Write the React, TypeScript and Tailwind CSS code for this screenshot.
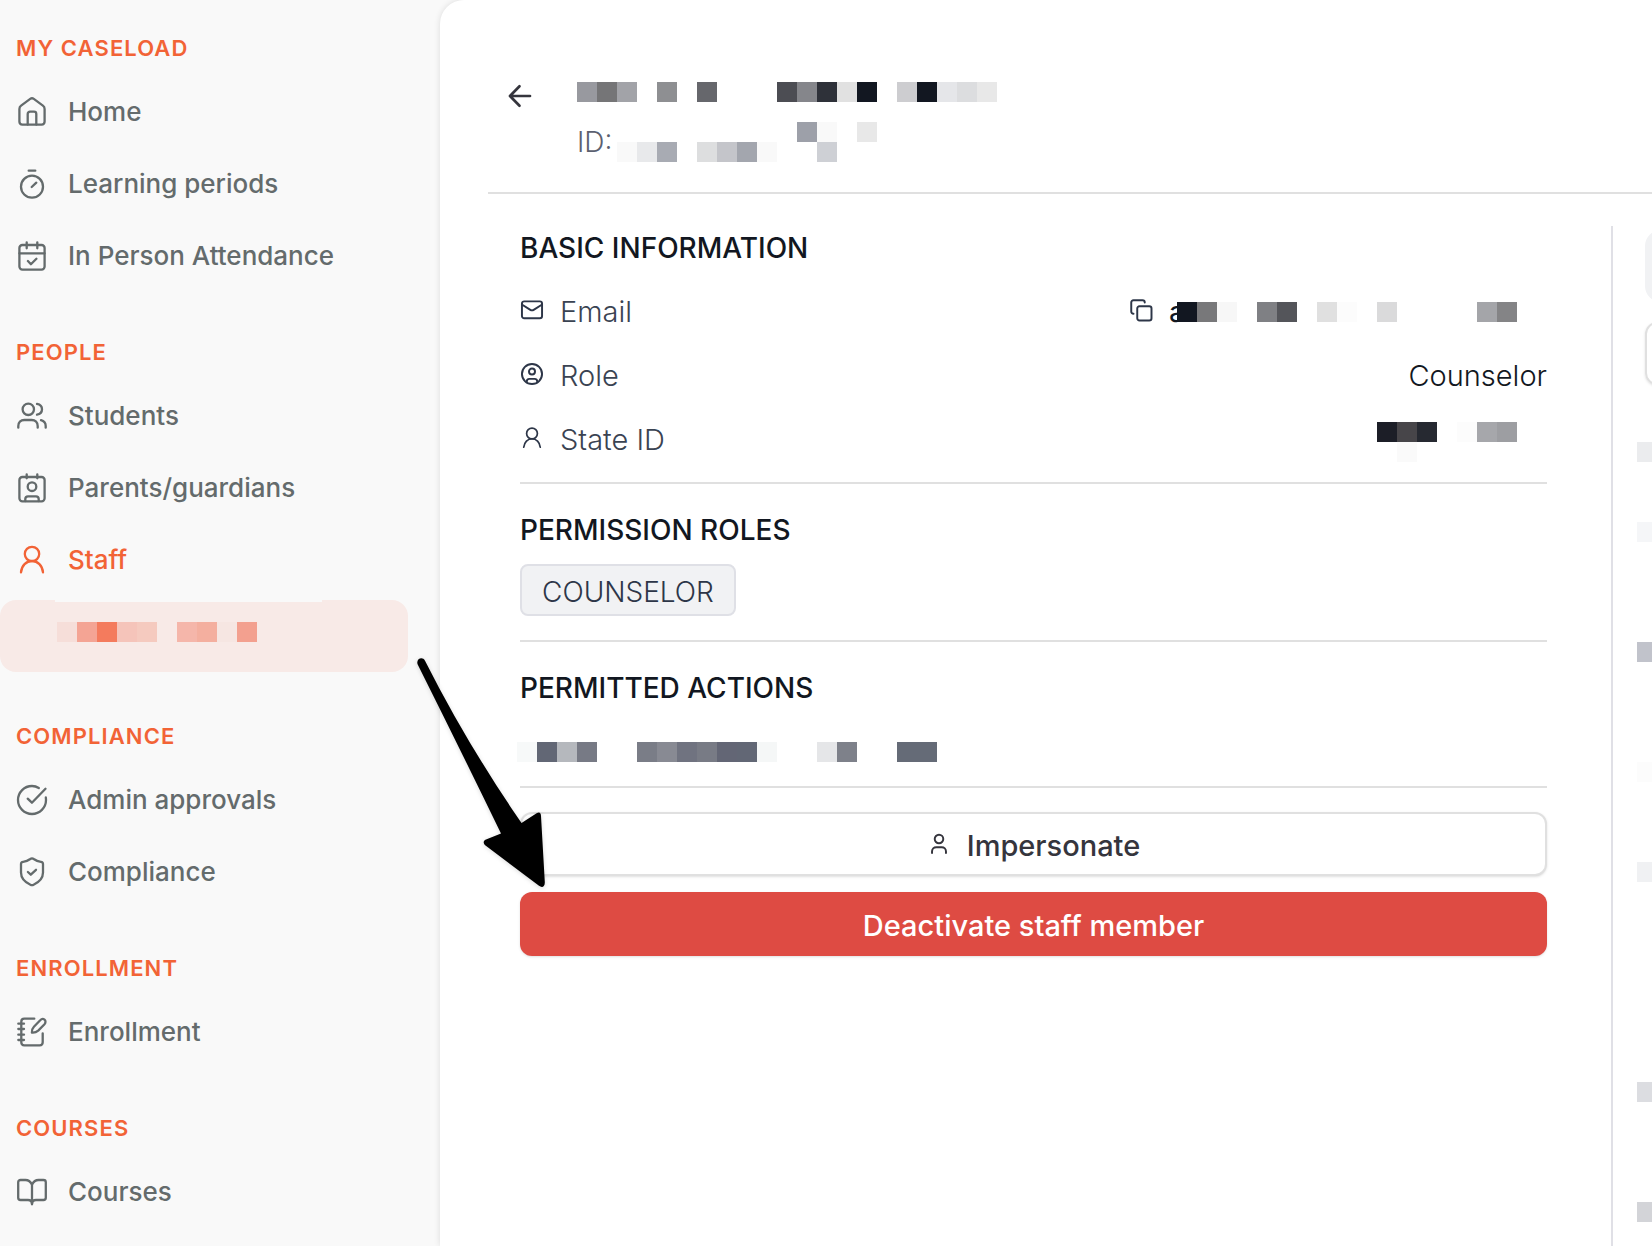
import { ReactNode } from "react";
import { clsx } from "clsx";

interface IconProps {
  children: ReactNode;
  className?: string;
}

function Icon({ children, className = "h-8 w-8" }: IconProps) {
  return (
    <svg
      viewBox="0 0 32 32"
      fill="none"
      stroke="currentColor"
      strokeWidth="2.300"
      strokeLinecap="round"
      strokeLinejoin="round"
      aria-hidden="true"
      className={clsx("shrink-0", className)}
    >
      {children}
    </svg>
  );
}

const icons = {
  home: (
    <>
      <path d="M3.4 13c0-1.4.6-2.6 1.700-3.400l9.100-6.700c1.100-.8 2.500-.8 3.600 0l9.100 6.700c1.100.8 1.700 2 1.700 3.400v12.600c0 1.700-1.300 3-3 3H6.400c-1.700 0-3-1.300-3-3z" />
      <path d="M11.700 28.600V18c0-1.300 1-2.300 2.300-2.300h4c1.300 0 2.300 1 2.300 2.300v10.600" />
    </>
  ),
  timer: (
    <>
      <circle cx="16" cy="18.700" r="11" />
      <path d="M12.700 2.700h6.600M15.700 19l4.600-4.300" />
    </>
  ),
  calendar: (
    <>
      <rect x="3.400" y="5" width="25.200" height="24.600" rx="3" />
      <path d="M3.400 13.300h25.200M10.700 2.300v6M21.300 2.300v6M11.900 21l3 3.200 5.500-5.500" />
    </>
  ),
  users: (
    <>
      <circle cx="12.300" cy="9.300" r="5.700" />
      <path d="M21 3.900c2.900.5 5 2.700 5 5.400s-2.100 4.900-5 5.400M2.300 27.700V26c0-3.600 2.400-6 6-6h7.400c3.600 0 6 2.400 6 6v1.700M25 20.200c3 .8 4.700 3 4.700 5.800v1.700" />
    </>
  ),
  contact: (
    <>
      <rect x="3.400" y="5" width="25.200" height="24.300" rx="3" />
      <circle cx="16" cy="14.700" r="4.300" />
      <path d="M10.700 2.300v4M21.300 2.300v4M9.300 29v-2c0-1.500 1.200-2.700 2.700-2.700h8c1.500 0 2.700 1.200 2.700 2.700v2" />
    </>
  ),
  user: (
    <>
      <circle cx="16" cy="10" r="7.200" />
      <path d="M5 28.300C5.600 21.600 10.300 17 16 17s10.400 4.600 11 11.300" />
    </>
  ),
  check: (
    <>
      <path d="M22.800 4C20.800 2.700 18.500 2 16 2 8.300 2 2 8.300 2 16s6.300 14 14 14 14-6.300 14-14c0-.9-.1-1.700-.2-2.500" />
      <path d="M11.700 14.700l4.200 4L29.500 4.700" />
    </>
  ),
  shield: (
    <>
      <path d="M14.300 3c1-.8 2.400-.8 3.400 0 2.300 1.700 4.300 2.500 7.200 2.800 1.200.1 2.100 1 2.100 2.200v8.600c0 6-4 9.700-9.400 12.200-1 .5-2.200.5-3.200 0C9 26.300 5 22.600 5 16.600V8c0-1.200.9-2.100 2.100-2.200 2.900-.3 4.900-1.100 7.200-2.800z" />
      <path d="M11.900 16l2.900 2.700 5.200-4.900" />
    </>
  ),
  notebook: (
    <>
      <path d="M18.300 2.700H8.300c-1.700 0-3 1.300-3 3v20.600c0 1.700 1.300 3 3 3h15.400c1.700 0 3-1.300 3-3v-9" />
      <path d="M2.300 7.700H8M2.300 13H8M2.300 18.700H8M2.300 24H8" />
      <path d="M15.900 16.600c-.3-2.500.5-4.300 2-5.900l6.300-6.500c1.200-1.300 3-1.700 4.300-.6s1.300 3.200 0 4.600l-6.300 6.400c-1.700 1.500-3.600 2.300-6.300 2z" />
    </>
  ),
  book: (
    <>
      <path d="M16 8.500C14.500 5.500 12.500 4 9.500 4H4.500C3.200 4 2.200 5 2.200 6.300v15.400c0 1.300 1 2.300 2.300 2.300H12c2.300 0 4 1.600 4 4 0-2.400 1.700-4 4-4h7.500c1.300 0 2.300-1 2.300-2.300V6.300C29.800 5 28.800 4 27.500 4h-5c-3 0-5 1.500-6.500 4.500z" />
      <path d="M16 8.500v19.800" />
    </>
  ),
};

interface NavItem {
  label: string;
  icon: ReactNode;
  active?: boolean;
}

const sections: { title: string; items: NavItem[] }[] = [
  {
    title: "MY CASELOAD",
    items: [
      { label: "Home", icon: icons.home },
      { label: "Learning periods", icon: icons.timer },
      { label: "In Person Attendance", icon: icons.calendar },
    ],
  },
  {
    title: "PEOPLE",
    items: [
      { label: "Students", icon: icons.users },
      { label: "Parents/guardians", icon: icons.contact },
      { label: "Staff", icon: icons.user, active: true },
    ],
  },
  {
    title: "COMPLIANCE",
    items: [
      { label: "Admin approvals", icon: icons.check },
      { label: "Compliance", icon: icons.shield },
    ],
  },
  { title: "ENROLLMENT", items: [{ label: "Enrollment", icon: icons.notebook }] },
  { title: "COURSES", items: [{ label: "Courses", icon: icons.book }] },
];

// Redacted text: one string per block, "" leaves a gap
const redacted = {
  name: [["bg-[#98999f]", "bg-[#757577]", "bg-[#a2a3a8]", "", "bg-[#8e8f92]", "", "bg-[#66676c]", "", "", "", "bg-[#4c4d53]", "bg-[#85868b]", "bg-[#2e3139]", "bg-[#e1e1e1]", "bg-[#121721]", "", "bg-[#cdcdd0]", "bg-[#121721]", "bg-[#e5e6e9]", "bg-[#dcdddf]", "bg-[#e8e8e8]"]],
  id: [
    ["", "", "", "", "", "", "", "", "", "bg-[#9da0a9]", "bg-[#f9f9f9]", "", "bg-[#e8e8e8]"],
    ["bg-[#f9f9f9]", "bg-[#e8e9eb]", "bg-[#a8abb3]", "", "bg-[#dddedf]", "bg-[#c4c5ca]", "bg-[#a3a6ae]", "bg-[#f9f9f9]", "", "", "bg-[#ced0d5]"],
  ],
  email: [["bg-[#121721]", "bg-[#78787a]", "bg-[#f7f7f7]", "", "bg-[#7f8084]", "bg-[#54555a]", "", "bg-[#e0e0e0]", "bg-[#fcfcfc]", "", "bg-[#dadadb]", "", "", "", "", "bg-[#a4a5a9]", "bg-[#848486]"]],
  stateId: [
    ["bg-[#1c1e27]", "bg-[#474549]", "bg-[#262931]", "", "bg-[#fcfcfc]", "bg-[#a6a7ab]", "bg-[#9d9ea2]"],
    ["", "bg-[#fafafa]"],
  ],
  actions: [["bg-[#f7f9f9]", "bg-[#626775]", "bg-[#b5b8bd]", "bg-[#777a85]", "", "", "bg-[#7a7d87]", "bg-[#888a93]", "bg-[#707380]", "bg-[#787b85]", "bg-[#636675]", "bg-[#626775]", "bg-[#f5f7f7]", "", "", "bg-[#e5e6e8]", "bg-[#7e818a]", "", "", "bg-[#656b77]", "bg-[#656b77]"]],
  staff: [["bg-[#f6ded9]", "bg-[#f4a494]", "bg-[#f47b5d]", "bg-[#f5c4ba]", "bg-[#f5cabf]", "", "bg-[#f5b6aa]", "bg-[#f4af9f]", "bg-[#f6e6e2]", "bg-[#f3a08f]"]],
};

function Redacted({ rows, className }: { rows: string[][]; className?: string }) {
  return (
    <div aria-hidden="true" className={clsx("relative", className)}>
      {rows.map((row, i) => (
        <div key={i} className="flex">
          {row.map((color, j) => (
            <span key={j} className={clsx("h-5 w-5 shrink-0", color)} />
          ))}
        </div>
      ))}
    </div>
  );
}

function Sidebar() {
  return (
    <nav className="flex w-[440px] shrink-0 flex-col gap-8 pt-5">
      {sections.map((section) => (
        <section key={section.title}>
          <h2 className="flex h-14 items-center px-4 text-[22px] font-semibold tracking-wider text-[#f26336]">
            {section.title}
          </h2>
          {section.items.map((item) => (
            <a
              key={item.label}
              href="#"
              className={clsx(
                "flex h-[72px] items-center gap-5 px-4 text-[26px] font-medium",
                item.active ? "text-[#f26336]" : "text-[#646b6c]"
              )}
            >
              <Icon>{item.icon}</Icon>
              <span className="pb-0.5">{item.label}</span>
            </a>
          ))}
          {section.title === "PEOPLE" && (
            <a
              href="#"
              aria-label="Selected staff member"
              className="my-1 mr-8 flex h-[72px] flex-col rounded-2xl bg-[#f8eae7]"
            >
              <span className="ml-[55px] h-0.5 w-[267px] bg-[#f9f9f9]" />
              <Redacted rows={redacted.staff} className="ml-[57px] mt-5" />
            </a>
          )}
        </section>
      ))}
    </nav>
  );
}

function InfoRow({ icon, label, children }: { icon: ReactNode; label: string; children: ReactNode }) {
  return (
    <div className="flex h-16 items-center justify-between text-[29px] font-light">
      <dt className="flex items-center gap-4 text-[#3a4352]">
        <Icon className="mb-1 h-6 w-6 text-[#2d3648]">{icon}</Icon>
        {label}
      </dt>
      <dd className="flex items-center text-[#121721]">{children}</dd>
    </div>
  );
}

function SectionTitle({ children }: { children: ReactNode }) {
  return <h3 className="flex h-11 items-center font-medium text-[#121721]">{children}</h3>;
}

function StaffDetails() {
  return (
    <div className="min-w-0 flex-1 pl-8 pr-16 text-[28px]">
      <section className="border-b-2 border-[#e0e0e0] pb-2.5">
        <SectionTitle>BASIC INFORMATION</SectionTitle>
        <dl className="mt-2.5">
          <InfoRow
            label="Email"
            icon={
              <g strokeWidth="2.600">
                <rect x="2.600" y="4.500" width="26.800" height="22.500" rx="3" />
                <path d="M3 9l10.800 6.800c1.400.9 3 .9 4.400 0L29 9" />
              </g>
            }
          >
            <button type="button" aria-label="Copy email" className="mb-1 mr-4 text-[#2d3648]">
              <Icon className="h-6 w-6">
                <g strokeWidth="2.600">
                  <rect x="11" y="11" width="19" height="19" rx="3" />
                  <path d="M6 21c-1.900 0-3-1.200-3-3V6c0-1.900 1.200-3 3-3h12c1.900 0 3 1.200 3 3" />
                </g>
              </Icon>
            </button>
            <span className="w-2 font-normal">a</span>
            <Redacted rows={redacted.email} className="mr-[30px]" />
          </InfoRow>
          <InfoRow
            label="Role"
            icon={
              <g strokeWidth="2.600">
                <circle cx="16" cy="16" r="13.400" />
                <circle cx="16" cy="12.700" r="4" />
                <path d="M9 27v-1c0-2 1.500-3.500 3.500-3.500h7c2 0 3.500 1.500 3.500 3.500v1" />
              </g>
            }
          >
            Counselor
          </InfoRow>
          <InfoRow label="State ID" icon={icons.user}>
            <Redacted rows={redacted.stateId} className="mr-[30px] mt-1" />
          </InfoRow>
        </dl>
      </section>

      <section className="border-b-2 border-[#e0e0e0] py-6">
        <SectionTitle>PERMISSION ROLES</SectionTitle>
        <span className="mt-3 flex h-[52px] w-fit items-center rounded-lg border-2 border-[#dfe0e6] bg-[#f1f2f4] px-5 pt-1 font-light text-[#2d3648]">
          COUNSELOR
        </span>
      </section>

      <section className="border-b-2 border-[#e0e0e0] py-6">
        <SectionTitle>PERMITTED ACTIONS</SectionTitle>
        <Redacted rows={redacted.actions} className="-ml-[3px] mt-8" />
      </section>

      <div className="mt-6 flex flex-col gap-4 text-[29px] font-medium">
        <button
          type="button"
          className="flex h-16 items-center justify-center gap-4 rounded-xl border-2 border-[#e0e0e0] bg-white pt-1 text-[#35353d] shadow-sm"
        >
          <Icon className="mb-1 h-6 w-6">
            <g strokeWidth="2.600">
              <circle cx="16" cy="9.300" r="5.700" />
              <path d="M6.700 28v-2c0-3.300 2.400-5.700 5.700-5.700h7.200c3.300 0 5.700 2.400 5.700 5.700v2" />
            </g>
          </Icon>
          Impersonate
        </button>
        <button
          type="button"
          className="flex h-16 items-center justify-center rounded-xl bg-[#de4b43] pt-1 text-white shadow-sm"
        >
          Deactivate staff member
        </button>
      </div>
    </div>
  );
}

function SidePanel() {
  return (
    <aside className="w-[41px] shrink-0 overflow-hidden border-l-2 border-[#e0e0e6]">
      <div className="ml-8 mt-1 h-[72px] w-20 rounded-2xl bg-[#f1f2f4]" />
      <div className="ml-8 mt-5 h-[63px] w-20 rounded-xl border-2 border-[#e0e0e0] shadow-sm" />
      <div aria-hidden="true" className="ml-6 mt-[57px]">
        <div className="h-5 bg-[#ebecee]" />
        <div className="mt-15 h-5 bg-[#f5f6f8]" />
        <div className="mt-25 h-5 bg-[#c1c3cb]" />
        <div className="mt-25 h-5 bg-[#fcfcfc]" />
        <div className="mt-20 h-5 bg-[#f0f1f3]" />
        <div className="mt-50 h-5 bg-[#dcdde1]" />
        <div className="mt-25 h-5 bg-[#d3d4d8]" />
      </div>
    </aside>
  );
}

export default function App() {
  return (
    <div className="relative flex min-h-screen bg-[#f9f9f9] font-['Inter','Liberation_Sans',sans-serif]">
      <Sidebar />
      <main className="flex min-w-0 flex-1 flex-col rounded-tl-3xl bg-white pl-12 shadow-[0_0_6px_rgba(0,0,0,0.12)]">
        <header className="flex border-b-2 border-[#e0e0e0] pb-[30px] pl-4 pt-20">
          <button type="button" aria-label="Back" className="h-8 w-8 text-[#35353d]">
            <Icon>
              <path strokeWidth="2.700" d="M26 16H6.300M15.500 6.300L6 16l9.500 9.700" />
            </Icon>
          </button>
          <div className="ml-[41px] mt-0.5 flex flex-col gap-5">
            <Redacted rows={redacted.name} />
            <div className="flex items-center text-[28px] font-light leading-10 text-[#5b6070]">
              <span className="w-10">ID:</span>
              <Redacted rows={redacted.id} />
            </div>
          </div>
        </header>
        <div className="mt-8 flex flex-1">
          <StaffDetails />
          <SidePanel />
        </div>
      </main>

      {/* Annotation arrow pointing at the deactivate button */}
      <svg
        viewBox="0 0 140 240"
        className="pointer-events-none absolute left-[410px] top-[652px] h-[240px] w-[140px] drop-shadow-sm"
        aria-hidden="true"
      >
        <path d="M7.700 12.500C5.500 7 12.500 4 15 8.700Q57 92 111.500 171L127 161C129.500 159.500 131 161 131 164L134.800 230C135 235 132 236 129 233.800L75.500 193.500C73 191.500 73 188.500 76 187.500L91 181.500Q50 97 7.700 12.500z" />
      </svg>
    </div>
  );
}
